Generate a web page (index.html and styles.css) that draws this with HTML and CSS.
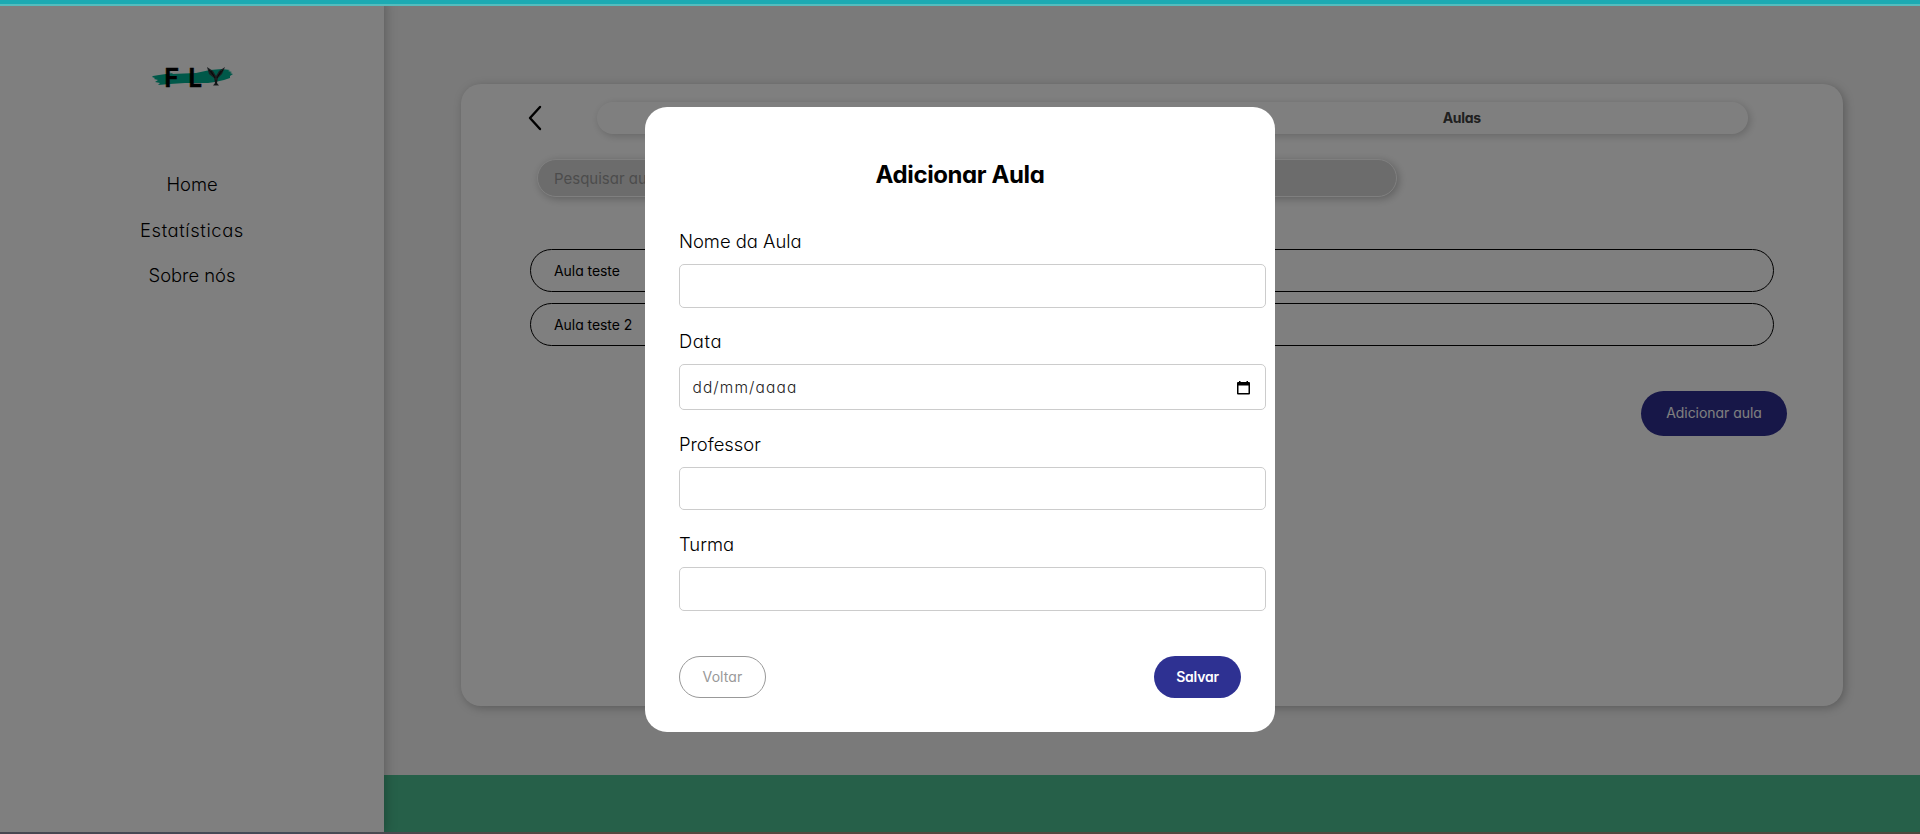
FILE: index.html
```html
<!DOCTYPE html>
<html lang="pt-BR">
<head>
<meta charset="utf-8">
<title>Fly - Aulas</title>
<link rel="stylesheet" href="styles.css">
</head>
<body>
<div class="app">
  <aside class="sidebar">
    <svg class="logo" viewBox="0 -10 84 46" width="84" height="46">
      <path class="brush" d="M3 10 L9 9 L23 7 L22 8 L46 7 L60 4 L72 3 L80 4 L78 5 L82 6 L80 7 L83 8 L80 10 L80 12 L74 14 L65 16 L58 17 L35 17 L20 18 L8 19 L10 17 L5 16 L8 14 L4 13 L5 12 L2 11Z"/>
      <text class="logo-text" x="14" y="20.5">F</text>
      <text class="logo-text" x="38" y="20.5">L</text>
      <g class="bird">
        <path d="M57 1 L63 5 L66 10 L69 5 L75 1 L72 8 L68 12 L67 17 L69 19.500 L63 19.500 L65 17 L64 12 L59 8Z"/>
        <path class="feather" d="M59 4l5 6M61 5l4 7M73 4l-5 6M71 5l-4 7M66 14v5"/>
      </g>
    </svg>
    <nav class="menu">
      <a>Home</a>
      <a class="wide">Estatísticas</a>
      <a>Sobre nós</a>
    </nav>
  </aside>
  <main class="main">
    <section class="card">
      <div class="head">
        <svg class="back" viewBox="0 0 14 26" width="14" height="26"><path d="M12 2 L2 13 L12 24"/></svg>
        <div class="tabs"><span class="tab"></span><span class="tab">Aulas</span></div>
      </div>
      <div class="search">Pesquisar aula</div>
      <div class="list">
        <div class="item">Aula teste</div>
        <div class="item">Aula teste 2</div>
      </div>
      <button class="add">Adicionar aula</button>
    </section>
    <footer class="footer"></footer>
  </main>
</div>
<div class="overlay">
  <div class="modal">
    <h2 class="title">Adicionar Aula</h2>
    <div class="field"><label>Nome da Aula</label><div class="input"></div></div>
    <div class="field field-date"><label class="data">Data</label><div class="input date"><span>dd/mm/aaaa</span>
      <svg class="calendar" viewBox="0 0 13 14" width="13" height="14"><path fill-rule="evenodd" d="M2 0h1.500v1h6V0H11v1h1q1 0 1 1v10.500q0 1-1 1H1q-1 0-1-1V2q0-1 1-1h1zM1.500 4.500v7.500h10V4.500z"/></svg></div></div>
    <div class="field"><label>Professor</label><div class="input short"></div></div>
    <div class="field"><label>Turma</label><div class="input"></div></div>
    <div class="actions"><button class="btn back-btn">Voltar</button><button class="btn save">Salvar</button></div>
  </div>
</div>
<div class="progress"></div>
<div class="bottom-edge"></div>
</body>
</html>
```
FILE: styles.css
```css
* { box-sizing: border-box; }
body {
  margin: 0;
  height: 834px;
  overflow: hidden;
  font-family: Inter, "Open Sans", sans-serif;
  font-feature-settings: "cv11";
  color: #000;
}
button { font: inherit; font-feature-settings: inherit; padding: 0; }
.app { display: flex; height: 834px; }
.sidebar {
  position: relative;
  width: 384px;
  background: #fff;
  box-shadow: 0 0 12px rgba(0,0,0,.3);
  display: flex;
  flex-direction: column;
  align-items: center;
  padding-top: 56px;
  z-index: 1;
}
.logo { display: block; }
.brush { fill: #00b092; }
.logo-text { font: bold 26px Lato, sans-serif; fill: #000; stroke: #000; stroke-width: .4; }
.bird { fill: #343c40; }
.feather { fill: none; stroke: #111; stroke-width: .9; }
.menu { display: flex; flex-direction: column; align-items: center; margin-top: 59px; }
.menu a { height: 45.5px; line-height: 46px; font-size: 18.4px; font-weight: 350; }
.menu .wide { letter-spacing: .6px; }
.main { flex: 1; display: flex; flex-direction: column; background: #f4f4f4; padding-top: 84px; }
.card {
  width: 1382px;
  height: 622px;
  margin-left: 77px;
  background: #fff;
  border-radius: 20px;
  box-shadow: 2px 2px 10px rgba(0,0,0,.25);
  padding: 18px 56px 0 69px;
  display: flex;
  flex-direction: column;
}
.head { display: flex; align-items: center; height: 32px; }
.back { margin: -1px 55px 0 -2px; }
.back path { fill: none; stroke: #000; stroke-width: 2.4; stroke-linecap: round; stroke-linejoin: round; }
.tabs { display: flex; width: 1151px; height: 32px; border-radius: 16px; box-shadow: 2px 2px 8px rgba(0,0,0,.2); }
.tab { flex: 1; padding-left: 3px; text-align: center; font-size: 14px; line-height: 31px; font-weight: 700; color: #404040; letter-spacing: -.3px; }
.search {
  width: 860px;
  height: 38px;
  margin: 25px 0 0 7px;
  padding-left: 16px;
  border: 1px solid #fff;
  border-radius: 19px;
  background: #d8d8d8;
  box-shadow: 2px 2px 8px rgba(0,0,0,.25);
  color: #999;
  font-size: 15px;
  line-height: 37px;
}
.list { display: flex; flex-direction: column; gap: 11px; margin-top: 52px; }
.item { width: 1244px; height: 43px; border: 1px solid #000; border-radius: 22px; padding-left: 23px; font-size: 14px; line-height: 41px; letter-spacing: -.06px; }
.add { align-self: flex-end; width: 146px; height: 45px; margin-top: 45px; padding-bottom: 2px; border: 0; border-radius: 23px; background: #2e2e91; color: #fff; font-size: 14px; letter-spacing: -.05px; }
.footer { height: 59px; margin-top: 69px; background: #4cc092; }
.overlay {
  position: fixed;
  inset: 0;
  background: rgba(0,0,0,.5);
  display: flex;
  justify-content: center;
  align-items: flex-start;
  padding-top: 107px;
  z-index: 2;
}
.modal { width: 630px; height: 625px; background: #fff; border-radius: 22px; padding: 51px 34px 0; }
.title { margin: 0 0 49px; font-size: 24px; line-height: 34px; font-weight: 650; text-align: center; letter-spacing: -.4px; }
.field { height: 100px; }
.field label { display: block; height: 23px; line-height: 1px; font-size: 18.4px; font-weight: 350; }
.field .data { letter-spacing: .6px; }
.input { width: 587px; height: 44px; border: 1px solid #ccc; border-radius: 5px; }
.short { height: 43px; }
.field-date { height: 103px; }
.date { height: 46px; display: flex; align-items: center; justify-content: space-between; padding: 1px 15px 0 12.5px; font-size: 15.5px; font-weight: 350; letter-spacing: 1.1px; color: #222; }
.calendar { fill: #000; }
.actions { display: flex; justify-content: space-between; margin-top: 12px; }
.btn { width: 87px; height: 42px; padding-bottom: 1px; border-radius: 21px; font-size: 14px; }
.back-btn { background: #fff; border: 1px solid #999; color: #999; letter-spacing: .1px; }
.save { border: 0; background: #2e3192; color: #fff; font-weight: 600; letter-spacing: -.2px; }
.progress { position: fixed; inset: 0 0 auto; height: 6px; background: #1caab2; border-bottom: 2px solid #55bcbd; z-index: 3; }
.bottom-edge { position: fixed; inset: auto 0 0; height: 2px; background: linear-gradient(90deg, #484650, #454a58 15%, #554840 30%, #50483f); z-index: 3; }
```
